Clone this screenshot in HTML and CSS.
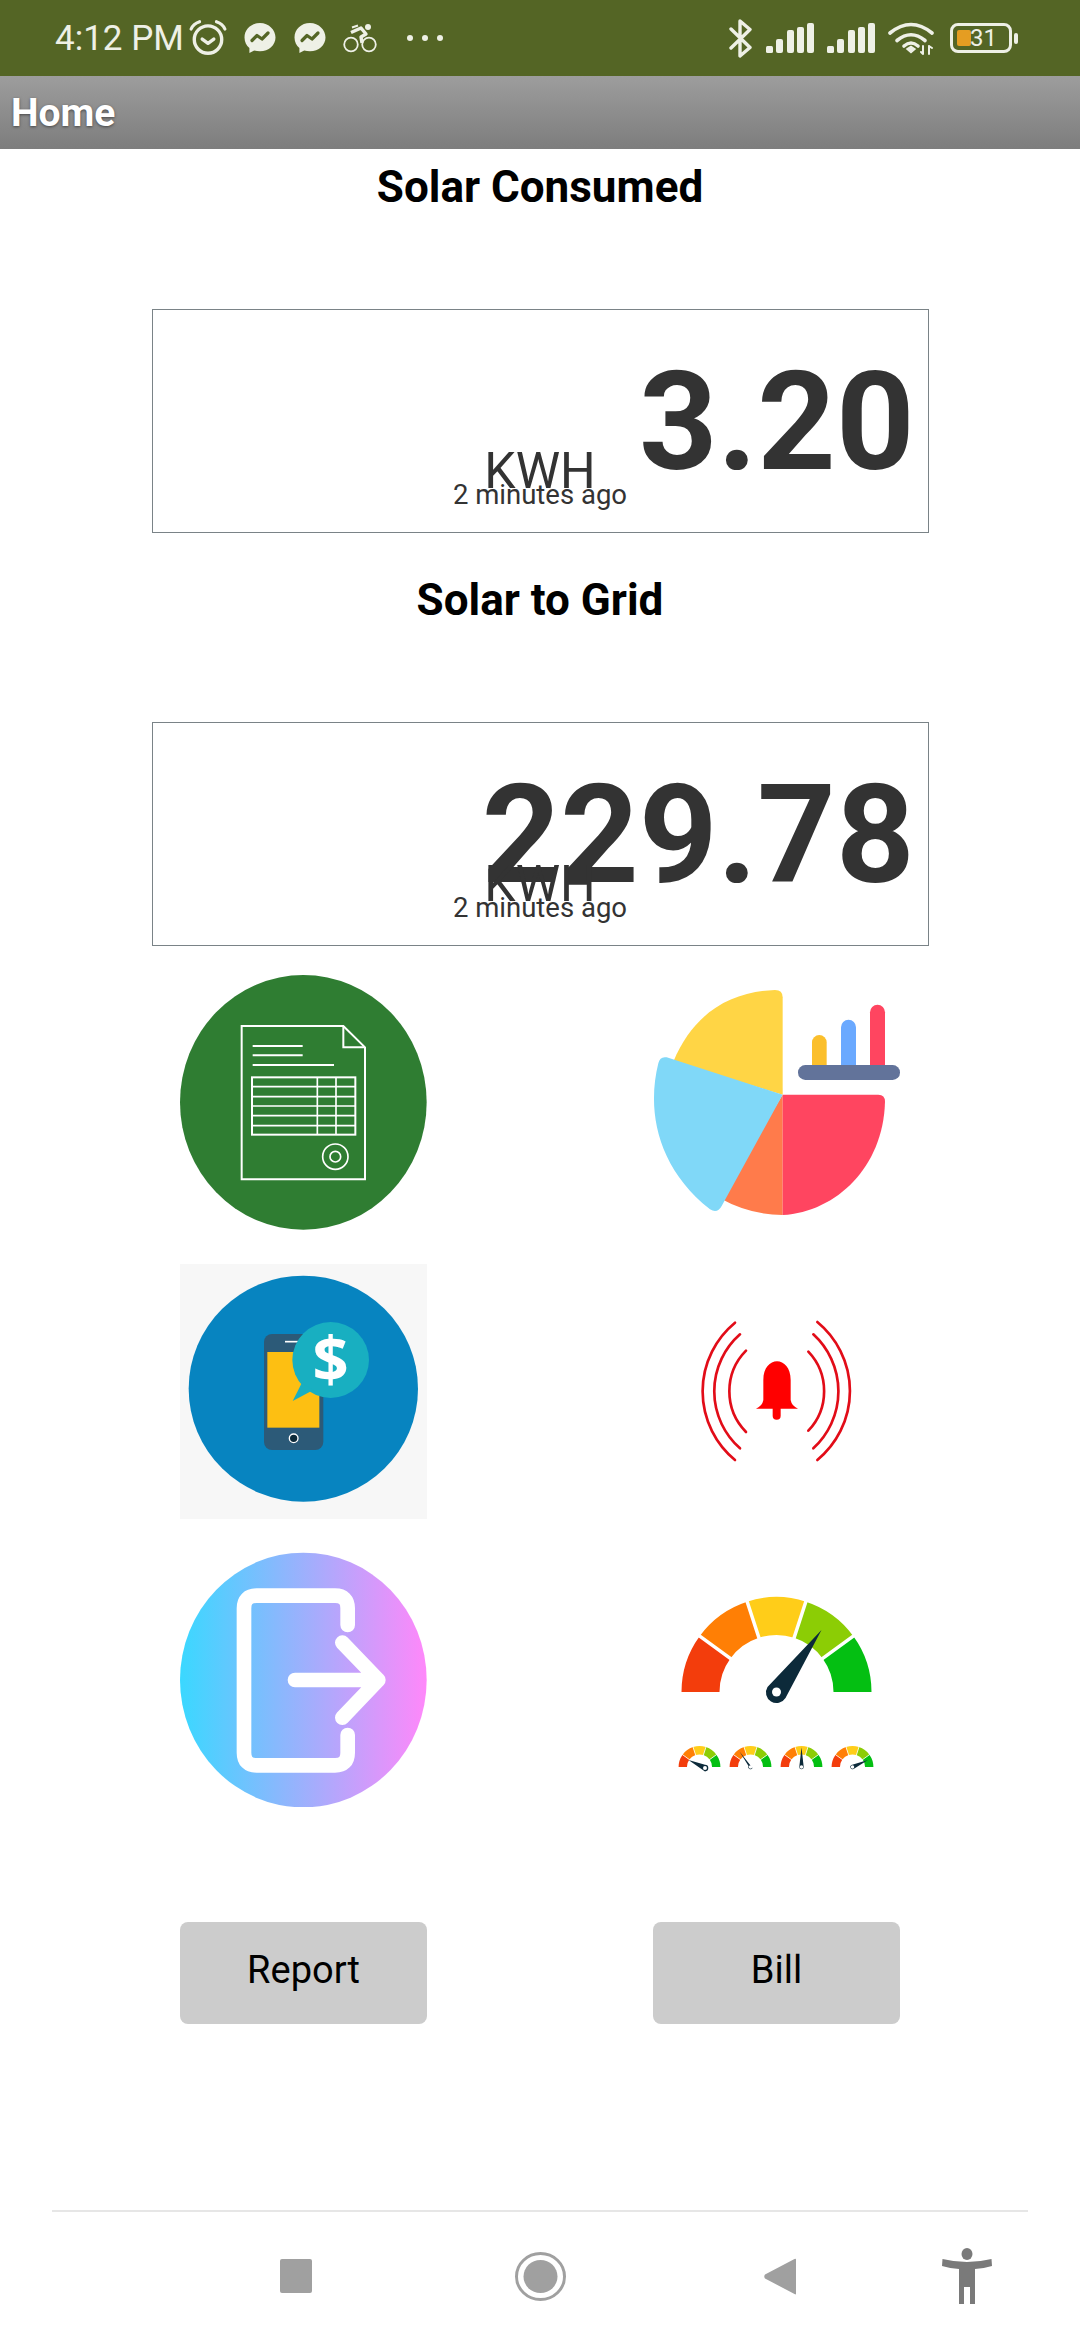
FILE: index.html
```html
<!DOCTYPE html>
<html lang="en">
<head>
  <meta charset="UTF-8" />
  <meta name="viewport" content="width=device-width, initial-scale=1.0" />
  <title>Home</title>
  <link rel="stylesheet" href="styles.css">
</head>
<body>
  <div class="status-bar">
    <div class="status-left">
      <span class="clock">4:12 PM</span>
      <svg class="ic-alarm" viewBox="0 0 36 36" fill="none" stroke="#eef0e6">
        <circle cx="18" cy="19.500" r="13" stroke-width="3.200"/>
        <path d="M12.500 19l5.500 4 5.500-4" stroke-width="3.200" stroke-linecap="round" stroke-linejoin="round"/>
        <path d="M2 9.500Q4 4.500 10 2.500M34 9.500Q32 4.500 26 2.500" stroke-width="3" stroke-linecap="round"/>
      </svg>
      <svg class="ic-msg" viewBox="0 0 32 32">
        <path fill="#eef0e6" d="M16 1C7.200 1 .500 7.300.500 15.400c0 4.300 1.900 8 4.900 10.500v5.100l4.800-2.600c1.800.5 3.800.8 5.800.8 8.800 0 15.500-6.300 15.500-13.800S24.800 1 16 1z"/>
        <path fill="none" stroke="#546525" stroke-width="3.200" stroke-linejoin="round" stroke-linecap="round" d="M8 18.500l5-5 5 3.500 6-6"/>
      </svg>
      <svg class="ic-msg" viewBox="0 0 32 32">
        <path fill="#eef0e6" d="M16 1C7.200 1 .500 7.300.500 15.400c0 4.300 1.900 8 4.900 10.500v5.100l4.800-2.600c1.800.5 3.800.8 5.800.8 8.800 0 15.500-6.300 15.500-13.800S24.800 1 16 1z"/>
        <path fill="none" stroke="#546525" stroke-width="3.200" stroke-linejoin="round" stroke-linecap="round" d="M8 18.500l5-5 5 3.500 6-6"/>
      </svg>
      <svg class="ic-bike" viewBox="0 0 34 30" fill="none" stroke="#eef0e6">
        <circle cx="8" cy="21.500" r="6.800" stroke-width="1.800"/>
        <circle cx="26" cy="21.500" r="6.800" stroke-width="1.800"/>
        <circle cx="25" cy="4" r="3" fill="#eef0e6" stroke="none"/>
        <path d="M8 9.500l10-4.500 5 6-5 3 1 6" stroke-width="3.400" stroke-linejoin="round"/>
        <path d="M9 4.500l6-2" stroke-width="2"/>
      </svg>
      <div class="dots"><i></i><i></i><i></i></div>
    </div>
    <div class="status-right">
      <svg class="ic-bt" viewBox="0 0 23 39" fill="none" stroke="#eef0e6" stroke-width="3.400" stroke-linecap="round" stroke-linejoin="round">
        <path d="M2 10l19 18.500L11 37V2l10 8.500L2 29"/>
      </svg>
      <svg class="ic-signal" viewBox="0 0 48 30" fill="#eef0e6">
        <rect x="0" y="23" width="7" height="7" rx="1.500"/>
        <rect x="10" y="16" width="7" height="14" rx="2"/>
        <rect x="21" y="7" width="7" height="23" rx="2"/>
        <rect x="41" y="0" width="7" height="30" rx="2"/>
        <rect x="31" y="4" width="7" height="26" rx="2"/>
      </svg>
      <svg class="ic-signal" viewBox="0 0 48 30" fill="#eef0e6">
        <rect x="0" y="23" width="7" height="7" rx="1.500"/>
        <rect x="10" y="16" width="7" height="14" rx="2"/>
        <rect x="21" y="7" width="7" height="23" rx="2"/>
        <rect x="41" y="0" width="7" height="30" rx="2"/>
        <rect x="31" y="4" width="7" height="26" rx="2"/>
      </svg>
      <svg class="ic-wifi" viewBox="0 0 46 34" fill="none" stroke="#eef0e6" stroke-width="3.600" stroke-linecap="round">
        <path d="M2 12Q23 -5 44 12"/>
        <path d="M9 19.500Q23 8 37 19.500"/>
        <path d="M16 25Q23 19 30 25"/>
        <path d="M19 28l4-2.500 4 2.500-4 3.500z" fill="#eef0e6" stroke-width="1.500"/>
        <path d="M35 25v8M33 31l2 2M41 33v-8M41 25l3 2" stroke-width="2"/>
      </svg>
      <div class="battery">
        <div class="battery-body">
          <span class="battery-fill"></span>
          <span class="battery-num">31</span>
        </div>
        <span class="battery-tip"></span>
      </div>
    </div>
  </div>

  <div class="title-bar">Home</div>

  <div class="main">
    <div class="heading">Solar Consumed</div>
    <div class="reading">
      <div class="reading-value">3.20</div>
      <div class="reading-unit">KWH</div>
      <div class="reading-time">2 minutes ago</div>
    </div>

    <div class="heading heading-next">Solar to Grid</div>
    <div class="reading">
      <div class="reading-value">229.78</div>
      <div class="reading-unit">KWH</div>
      <div class="reading-time">2 minutes ago</div>
    </div>

    <div class="tiles">
      <svg class="tile" viewBox="60 45 741 765">
        <ellipse cx="430" cy="427" rx="370" ry="382" fill="#2f7d32"/>
        <g fill="none" stroke="#fff" stroke-width="6">
          <path d="M245 198H550L615 262V658H245Z"/>
          <path d="M550 198V262H615"/>
          <path d="M278 258H428M278 286H428M278 315H522"/>
          <rect x="276" y="352" width="310" height="172"/>
          <path d="M276 380H586M276 410H586M276 438H586M276 467H586M276 497H586M472 352V524M528 352V524" stroke-width="5"/>
          <circle cx="526" cy="590" r="38" stroke-width="5"/>
          <circle cx="526" cy="590" r="16" stroke-width="5"/>
        </g>
      </svg>

      <svg class="tile" viewBox="69 15 741 765">
        <path fill="#ff7b4b" d="M458 374V735Q360 735 270 685Z"/>
        <path fill="#ff4560" d="M458 374H745Q765 374 765 395C760 590 620 725 458 735Z"/>
        <path fill="#ffd545" d="M458 374V82Q458 60 435 60C300 65 190 130 130 275Z"/>
        <path fill="#80d8f8" d="M458 374L110 262Q90 258 85 280C50 420 80 590 240 718Q262 732 275 708Z"/>
        <path fill="#fbbf2c" d="M546 300V217a22 22 0 0 1 44 0V300Z"/>
        <path fill="#6aa9ff" d="M633 300V172a22 22 0 0 1 45 0V300Z"/>
        <path fill="#ff4560" d="M720 300V127a22 22 0 0 1 45 0V300Z"/>
        <rect x="504" y="285" width="306" height="45" rx="22" fill="#62739a"/>
      </svg>

      <svg class="tile tile-pale" viewBox="30 42 741 765">
        <ellipse cx="400" cy="416" rx="344" ry="339" fill="#0784c0"/>
        <rect x="282" y="252" width="178" height="348" rx="24" fill="#2c5a78"/>
        <rect x="292" y="306" width="156" height="227" fill="#fdbf12"/>
        <path d="M345 275H385" stroke="#fff" stroke-width="5"/>
        <circle cx="371" cy="565" r="13" fill="#0c2a3a" stroke="#fff" stroke-width="4"/>
        <ellipse cx="482" cy="330" rx="115" ry="114" fill="#18afc1"/>
        <path d="M395 400L368 453L430 420Z" fill="#18afc1"/>
        <text class="dollar" x="482" y="396" text-anchor="middle">$</text>
      </svg>

      <svg class="tile" viewBox="-81 -108 741 765">
        <path fill="#f00" d="M250 240C250 165 332 165 332 240V300Q335 318 354 326H228Q247 318 250 300Z"/>
        <path d="M290 320V347" stroke="#f00" stroke-width="24" stroke-linecap="round"/>
        <g fill="none" stroke="#e20c18" stroke-width="8" stroke-linecap="round">
          <path d="M165 68A267 267 0 0 0 165 480"/>
          <path d="M180 103A228 228 0 0 0 180 445"/>
          <path d="M198 152A174 174 0 0 0 198 396"/>
          <path d="M412 66A268 268 0 0 1 412 480"/>
          <path d="M400 103A232 232 0 0 1 400 445"/>
          <path d="M385 155A172 172 0 0 1 385 392"/>
        </g>
      </svg>

      <svg class="tile" viewBox="30 36 741 765">
        <defs>
          <linearGradient id="logout-fill" x1="0" x2="1" y1="0" y2="0">
            <stop offset="0" stop-color="#3ad8ff"/>
            <stop offset="1" stop-color="#ff88fa"/>
          </linearGradient>
        </defs>
        <ellipse cx="400" cy="420" rx="370" ry="382" fill="url(#logout-fill)"/>
        <g fill="none" stroke="#fff" stroke-width="44" stroke-linecap="round" stroke-linejoin="round">
          <path d="M533 255V205Q533 167 495 167H260Q222 167 222 205V638Q222 676 260 676H495Q533 676 533 638V585"/>
          <path d="M375 420H625M517 308L625 420L517 533"/>
        </g>
      </svg>

      <svg class="tile" viewBox="0 0 247 255">
        <defs>
          <g id="dial">
            <g fill="none" stroke-width="38">
              <path stroke="#f33d0c" d="M-76 0A76 76 0 0 1 -61.500 -44.700"/>
              <path stroke="#ff7f05" d="M-61.500 -44.700A76 76 0 0 1 -23.500 -72.300"/>
              <path stroke="#ffcd19" d="M-23.500 -72.300A76 76 0 0 1 23.500 -72.300"/>
              <path stroke="#8ccd05" d="M23.500 -72.300A76 76 0 0 1 61.500 -44.700"/>
              <path stroke="#04bf12" d="M61.500 -44.700A76 76 0 0 1 76 0"/>
            </g>
            <path stroke="#fff" stroke-width="3.500" d="M-38 -27.600L-85 -61.800M-14.500 -44.700L-32.500 -100M14.500 -44.700L32.500 -100M38 -27.600L85 -61.800"/>
          </g>
        </defs>
        <use href="#dial" transform="translate(123.500 140)"/>
        <g transform="translate(123.500 140)">
          <path fill="#0c2a3a" d="M-9 -5L45 -62L9 6A10.500 10.500 0 0 1 -9 -5Z"/>
          <circle r="4.500" fill="#fff"/>
        </g>
        <g transform="translate(46.500 215) scale(.22)">
          <use href="#dial"/>
          <path fill="#0c2a3a" d="M25 -10L-50 -32L25 20A14 14 0 0 0 25 -10Z"/>
          <circle cx="25" cy="5" r="9" fill="#fff"/>
        </g>
        <g transform="translate(97.500 215) scale(.22)">
          <use href="#dial"/>
          <path fill="#0c2a3a" d="M-9 -5L-50 -70L9 5A10 10 0 0 1 -9 -5Z"/>
          <circle r="8" fill="#fff"/>
        </g>
        <g transform="translate(148.500 215) scale(.22)">
          <use href="#dial"/>
          <path fill="#0c2a3a" d="M-10 0L0 -90L10 0A10 10 0 0 1 -10 0Z"/>
          <circle r="8" fill="#fff"/>
        </g>
        <g transform="translate(199.500 215) scale(.22)">
          <use href="#dial"/>
          <path fill="#0c2a3a" d="M-5 -9L70 -32L5 9A10 10 0 0 1 -5 -9Z"/>
          <circle r="8" fill="#fff"/>
        </g>
      </svg>
    </div>

    <div class="actions">
      <button class="action-btn">Report</button>
      <button class="action-btn">Bill</button>
    </div>
  </div>

  <div class="nav">
    <span class="nav-square"></span>
    <svg class="nav-home" viewBox="0 0 51 49">
      <ellipse cx="25.500" cy="24.500" rx="24" ry="23" fill="none" stroke="#a0a0a0" stroke-width="3"/>
      <ellipse cx="25.500" cy="24.500" rx="17" ry="16.500" fill="#a0a0a0"/>
    </svg>
    <svg class="nav-back" viewBox="0 0 33 37">
      <path fill="#a0a0a0" d="M32 1.500V35.500Q32 37 30.500 36L1 20.500Q-.500 18.500 1 16.500L30.500 1Q32 .5 32 1.500Z"/>
    </svg>
    <svg class="nav-person" viewBox="0 0 50 56">
      <ellipse cx="25" cy="6" rx="5.500" ry="6" fill="#7a7a7a"/>
      <path fill="#7a7a7a" d="M.500 11Q25 17 49.500 11L50 18Q42 20.500 33 21V56H28V39H22V56H17V21Q8 20.500 0 18Z"/>
    </svg>
  </div>
</body>
</html>
```

FILE: styles.css
```css
* {
  box-sizing: border-box;
  font-family: Roboto, Arial, sans-serif;
}
html, body {
  margin: 0;
  padding: 0;
  background: #fff;
  width: 1080px;
  height: 2340px;
  overflow: hidden;
}
body {
  display: flex;
  flex-direction: column;
}
.status-bar {
  height: 76px;
  background: #546525;
  color: #eef0e6;
  display: flex;
  align-items: center;
  justify-content: space-between;
  padding: 0 62px 0 55px;
}
.status-left, .status-right {
  display: flex;
  align-items: center;
}
.clock {
  font-size: 35px;
  width: 134px;
  white-space: nowrap;
}
.ic-alarm {
  width: 38px;
  height: 38px;
  margin-right: 17px;
}
.ic-msg {
  width: 32px;
  height: 32px;
  margin-right: 18px;
}
.ic-bike {
  width: 34px;
  height: 30px;
  margin-left: -1px;
}
.dots {
  display: flex;
  gap: 9px;
  margin-left: 30px;
}
.dots i {
  width: 6px;
  height: 6px;
  border-radius: 50%;
  background: #eef0e6;
}
.ic-bt {
  width: 23px;
  height: 39px;
  margin-right: 14px;
}
.ic-signal {
  width: 48px;
  height: 30px;
  margin-right: 13px;
}
.ic-wifi {
  width: 46px;
  height: 34px;
  margin-right: 16px;
}
.battery {
  display: flex;
  align-items: center;
  gap: 2px;
}
.battery-body {
  width: 62px;
  height: 30px;
  border: 3px solid #eef0e6;
  border-radius: 8px;
  display: flex;
  align-items: center;
  padding-left: 4px;
}
.battery-fill {
  width: 14px;
  height: 16px;
  background: #e59d22;
  border-radius: 2px;
}
.battery-num {
  font-size: 24px;
  line-height: 24px;
  margin-left: -1px;
}
.battery-tip {
  width: 4px;
  height: 11px;
  background: #eef0e6;
  border-radius: 2px;
}
.title-bar {
  height: 73px;
  background: linear-gradient(to bottom, #9d9d9d, #7d7d7d);
  color: #fff;
  font-size: 39px;
  font-weight: bold;
  line-height: 75px;
  padding-left: 11px;
  text-shadow: 0 1px 3px rgba(0,0,0,0.5);
}
.main {
  flex: 1;
  display: flex;
  flex-direction: column;
  align-items: center;
}
.heading {
  height: 74px;
  line-height: 76px;
  font-size: 44px;
  font-weight: bold;
  color: #000;
  margin-bottom: 86px;
}
.heading-next {
  margin-top: 29px;
}
.reading {
  width: 777px;
  height: 224px;
  border: 1px solid #7a8387;
  display: grid;
  color: #333;
}
.reading > div {
  grid-area: 1 / 1;
  align-self: end;
  white-space: nowrap;
}
.reading-value {
  font-size: 137px;
  line-height: 140px;
  font-weight: bold;
  justify-self: end;
  margin: 0 13px 40px 0;
}
.reading-unit {
  font-size: 50px;
  line-height: 50px;
  justify-self: center;
  margin-bottom: 36px;
}
.reading-time {
  font-size: 27.500px;
  line-height: 27px;
  justify-self: center;
  margin-bottom: 24px;
}
.tiles {
  display: grid;
  grid-template-columns: 247px 247px;
  grid-auto-rows: 255px;
  column-gap: 226px;
  row-gap: 33.5px;
  margin-top: 29px;
}
.tile {
  display: block;
  width: 247px;
  height: 255px;
}
.tile-pale {
  background: #f7f7f7;
}
.dollar {
  font-family: "Open Sans", Roboto, sans-serif;
  font-size: 190px;
  font-weight: bold;
  fill: #fff;
}
.actions {
  display: flex;
  gap: 226px;
  margin-top: 115px;
}
.action-btn {
  width: 247px;
  height: 102px;
  border: none;
  border-radius: 8px;
  background: #ccc;
  color: #000;
  font-size: 38px;
  padding: 0 0 7px;
}
.nav {
  height: 130px;
  margin: 0 52px;
  border-top: 2px solid #e6e6e6;
  display: flex;
  align-items: center;
  padding-left: 228px;
}
.nav-square {
  width: 32px;
  height: 34px;
  background: #a0a0a0;
  border-radius: 2px;
}
.nav-home {
  width: 51px;
  height: 49px;
  margin-left: 203px;
}
.nav-back {
  width: 33px;
  height: 37px;
  margin-left: 198px;
}
.nav-person {
  width: 50px;
  height: 56px;
  margin-left: 145px;
}
```
